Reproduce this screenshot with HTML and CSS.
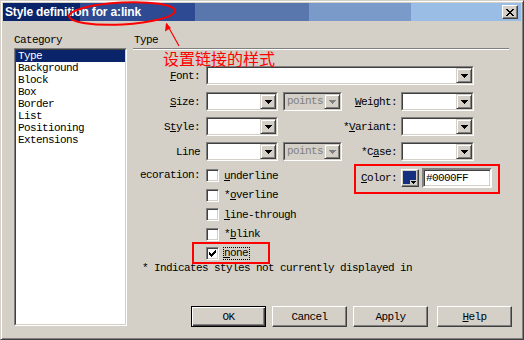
FILE: index.html
```html
<!DOCTYPE html>
<html lang="en">
<head>
  <meta charset="UTF-8">
  <title>Style definition for a:link</title>
  <link rel="stylesheet" href="styles.css">
</head>
<body>
  <div class="window">
    <div class="titlebar">
      <span class="title">Style definition for a:link</span>
      <span class="close">
        <svg width="8" height="7" viewBox="0 0 8 7"><path d="M0 0h2v1H0z M6 0h2v1H6z M1 1h2v1H1z M5 1h2v1H5z M2 2h4v1H2z M3 3h2v1H3z M2 4h4v1H2z M1 5h2v1H1z M5 5h2v1H5z M0 6h2v1H0z M6 6h2v1H6z"/></svg>
      </span>
    </div>

    <div class="main">
      <div class="sidebar">
        <div class="cap">Category</div>
        <div class="listbox">
          <ul class="list">
            <li class="sel">Type</li>
            <li>Background</li>
            <li>Block</li>
            <li>Box</li>
            <li>Border</li>
            <li>List</li>
            <li>Positioning</li>
            <li>Extensions</li>
          </ul>
        </div>
      </div>

      <div class="panel">
        <div class="cap type-cap">Type</div>
        <div class="rule"></div>

        <div class="row first">
          <span class="lbl"><u>F</u>ont:</span>
          <div class="combo w-font"><div class="field"><span class="val"></span><span class="drop"><svg width="7" height="4" viewBox="0 0 7 4"><path d="M0 0h7v1H0z M1 1h5v1H1z M2 2h3v1H2z M3 3h1v1H3z"/></svg></span></div></div>
        </div>

        <div class="row">
          <span class="lbl"><u>S</u>ize:</span>
          <div class="grp">
            <div class="combo w-size"><div class="field"><span class="val"></span><span class="drop"><svg width="7" height="4" viewBox="0 0 7 4"><path d="M0 0h7v1H0z M1 1h5v1H1z M2 2h3v1H2z M3 3h1v1H3z"/></svg></span></div></div>
            <div class="combo w-pts disabled"><div class="field"><span class="val">points</span><span class="drop"><svg width="7" height="4" viewBox="0 0 7 4"><path d="M0 0h7v1H0z M1 1h5v1H1z M2 2h3v1H2z M3 3h1v1H3z"/></svg></span></div></div>
          </div>
          <span class="rlbl"><u>W</u>eight:</span>
          <div class="combo w-right"><div class="field"><span class="val"></span><span class="drop"><svg width="7" height="4" viewBox="0 0 7 4"><path d="M0 0h7v1H0z M1 1h5v1H1z M2 2h3v1H2z M3 3h1v1H3z"/></svg></span></div></div>
        </div>

        <div class="row">
          <span class="lbl">S<u>t</u>yle:</span>
          <div class="grp">
            <div class="combo w-size"><div class="field"><span class="val"></span><span class="drop"><svg width="7" height="4" viewBox="0 0 7 4"><path d="M0 0h7v1H0z M1 1h5v1H1z M2 2h3v1H2z M3 3h1v1H3z"/></svg></span></div></div>
          </div>
          <span class="rlbl">*<u>V</u>ariant:</span>
          <div class="combo w-right"><div class="field"><span class="val"></span><span class="drop"><svg width="7" height="4" viewBox="0 0 7 4"><path d="M0 0h7v1H0z M1 1h5v1H1z M2 2h3v1H2z M3 3h1v1H3z"/></svg></span></div></div>
        </div>

        <div class="row">
          <span class="lbl">Line</span>
          <div class="grp">
            <div class="combo w-size"><div class="field"><span class="val"></span><span class="drop"><svg width="7" height="4" viewBox="0 0 7 4"><path d="M0 0h7v1H0z M1 1h5v1H1z M2 2h3v1H2z M3 3h1v1H3z"/></svg></span></div></div>
            <div class="combo w-pts disabled"><div class="field"><span class="val">points</span><span class="drop"><svg width="7" height="4" viewBox="0 0 7 4"><path d="M0 0h7v1H0z M1 1h5v1H1z M2 2h3v1H2z M3 3h1v1H3z"/></svg></span></div></div>
          </div>
          <span class="rlbl">*C<u>a</u>se:</span>
          <div class="combo w-right"><div class="field"><span class="val"></span><span class="drop"><svg width="7" height="4" viewBox="0 0 7 4"><path d="M0 0h7v1H0z M1 1h5v1H1z M2 2h3v1H2z M3 3h1v1H3z"/></svg></span></div></div>
        </div>

        <div class="deco">
          <span class="lbl deco-lbl">ecoration:</span>
          <div class="checks">
            <div class="check"><span class="box"></span><span class="ctext"><u>u</u>nderline</span></div>
            <div class="check"><span class="box"></span><span class="ctext">*<u>o</u>verline</span></div>
            <div class="check"><span class="box"></span><span class="ctext"><u>l</u>ine-through</span></div>
            <div class="check"><span class="box"></span><span class="ctext">*<u>b</u>link</span></div>
            <div class="check"><span class="box"><svg width="7" height="7" viewBox="0 0 7 7"><path d="M6 0h1v1H6z M5 1h2v1H5z M0 2h1v1H0z M4 2h3v1H4z M0 3h2v1H0z M3 3h3v1H3z M0 4h5v1H0z M1 5h3v1H1z M2 6h1v1H2z"/></svg></span><span class="ctext focus"><u>n</u>one</span></div>
          </div>
          <div class="color">
            <span class="rlbl"><u>C</u>olor:</span>
            <span class="swatch">
              <span class="chip"></span>
              <span class="notch"><svg width="5" height="3" viewBox="0 0 5 3"><path d="M0 0h5v1H0z M1 1h3v1H1z M2 2h1v1H2z"/></svg></span>
            </span>
            <span class="text-in">#0000FF</span>
          </div>
        </div>

        <p class="note">* Indicates styles not currently displayed in</p>

        <div class="buttons">
          <button class="btn default">OK</button>
          <button class="btn">Cancel</button>
          <button class="btn">Apply</button>
          <button class="btn help"><u>H</u>elp</button>
        </div>
      </div>
    </div>

    <div class="hint">设置链接的样式</div>
    <svg class="marks" width="524" height="340" viewBox="0 0 524 340">
      <ellipse cx="121" cy="12.5" rx="53" ry="11" transform="rotate(-3 121 12.5)" fill="none" stroke="#f00" stroke-width="2"/>
      <path d="M178 45L165.5 22.5" stroke="#f00" stroke-width="1.2" fill="none"/>
      <path d="M165 22L164 30.5L170 27z" fill="#f00"/>
      <rect x="354" y="164" width="144" height="28" fill="none" stroke="#f00" stroke-width="2"/>
      <rect x="192" y="242" width="76" height="20" fill="none" stroke="#f00" stroke-width="2"/>
    </svg>
  </div>
</body>
</html>
```

FILE: styles.css
```css
body {
  margin: 0;
  font-family: "Liberation Mono", monospace;
  font-size: 11px;
  letter-spacing: -0.6px;
  color: #000;
}
.window {
  position: relative;
  width: 524px;
  height: 340px;
  box-sizing: border-box;
  background: #d4d0c8;
  border: 1px solid;
  border-color: #d4d0c8 #404040 #404040 #d4d0c8;
  box-shadow: inset 1px 1px #fff, inset -1px -1px #808080;
  padding: 2px;
  display: flex;
  flex-direction: column;
}

/* title bar */
.titlebar {
  height: 18px;
  display: flex;
  align-items: center;
  background: linear-gradient(to right,
    #0a246a 0 77px, #2e4a92 77px 192px, #5977ad 192px 306px,
    #7a9bc9 306px 408px, #99bde5 408px);
}
.title {
  flex: 1;
  padding-left: 2px;
  font: bold 12px/18px "Liberation Sans", sans-serif;
  letter-spacing: -0.15px;
  color: #fff;
}
.close {
  width: 16px;
  height: 14px;
  box-sizing: border-box;
  margin-right: 3px;
  background: #d4d0c8;
  border: 1px solid;
  border-color: #fff #404040 #404040 #fff;
  box-shadow: inset -1px -1px #808080;
  display: flex;
  align-items: center;
  justify-content: center;
}

.main {
  flex: 1;
  display: flex;
}
.cap {
  line-height: 12px;
  padding-top: 13px;
}

/* category list */
.sidebar {
  width: 113px;
  margin-left: 11px;
}
.listbox {
  margin-top: 2px;
  height: 278px;
  box-sizing: border-box;
  border: 1px solid;
  border-color: #808080 #fff #fff #808080;
}
.list {
  height: 100%;
  box-sizing: border-box;
  margin: 0;
  padding: 0;
  list-style: none;
  background: #fff;
  border: 1px solid;
  border-color: #404040 #d4d0c8 #d4d0c8 #404040;
}
.list li {
  line-height: 12px;
  padding-left: 2px;
}
.list .sel {
  background: #0a246a;
  color: #fff;
}

/* type panel */
.panel {
  width: 379px;
  margin-left: 6px;
  display: flex;
  flex-direction: column;
}
.type-cap {
  padding-left: 1px;
}
.rule {
  width: 376px;
  margin-top: 2px;
  border-top: 1px solid #808080;
  border-bottom: 1px solid #fff;
}
.row {
  display: flex;
  align-items: center;
  height: 19px;
  margin-top: 6px;
}
.row.first {
  margin-top: 16px;
}
.row + .row {
  margin-top: 7px;
}
.row + .row + .row {
  margin-top: 6px;
}
.lbl {
  width: 67px;
  margin-right: 6px;
  text-align: right;
  white-space: nowrap;
}
.rlbl {
  width: 55px;
  margin-right: 4px;
  text-align: right;
  white-space: nowrap;
}
.grp {
  width: 136px;
  display: flex;
}

/* combo boxes */
.combo {
  height: 19px;
  box-sizing: border-box;
  border: 1px solid;
  border-color: #808080 #fff #fff #808080;
}
.field {
  height: 100%;
  box-sizing: border-box;
  display: flex;
  background: #fff;
  border: 1px solid;
  border-color: #404040 #d4d0c8 #d4d0c8 #404040;
}
.val {
  flex: 1;
  padding-left: 2px;
  line-height: 15px;
}
.drop {
  width: 16px;
  box-sizing: border-box;
  background: #d4d0c8;
  border: 1px solid;
  border-color: #d4d0c8 #404040 #404040 #d4d0c8;
  box-shadow: inset 1px 1px #fff, inset -1px -1px #808080;
  display: flex;
  align-items: center;
  justify-content: center;
}
.w-font { width: 268px; }
.w-size { width: 72px; }
.w-pts { width: 59px; margin-left: 5px; }
.w-right { width: 73px; }
.disabled .field { background: #d4d0c8; }
.disabled .val { color: #808080; }
.disabled svg { fill: #808080; }

/* decoration */
.deco {
  display: flex;
  align-items: flex-start;
  margin-top: 8px;
}
.deco-lbl {
  line-height: 13px;
}
.checks {
  width: 136px;
}
.check {
  display: flex;
  align-items: center;
  height: 13px;
}
.check + .check {
  margin-top: 6.5px;
}
.box {
  width: 13px;
  height: 13px;
  box-sizing: border-box;
  background: #fff;
  border: 1px solid;
  border-color: #808080 #fff #fff #808080;
  box-shadow: inset 1px 1px #404040, inset -1px -1px #d4d0c8;
  padding: 2px 0 0 2px;
}
.box svg {
  display: block;
}
.ctext {
  margin-left: 5px;
  white-space: nowrap;
}
.ctext.focus {
  margin-left: 4px;
  line-height: 11px;
  border: 1px dotted #000;
  padding-right: 1px;
}
.color {
  display: flex;
  align-items: center;
  height: 20px;
  margin-top: -1px;
}
.swatch {
  position: relative;
  width: 18px;
  height: 18px;
  box-sizing: border-box;
  margin-right: 3px;
  background: #d4d0c8;
  border: 1px solid;
  border-color: #fff #404040 #404040 #fff;
  box-shadow: inset -1px -1px #808080;
  padding: 1px;
}
.chip {
  display: block;
  width: 13px;
  height: 13px;
  background: #14307f;
}
.notch {
  position: absolute;
  right: 1px;
  bottom: 1px;
  width: 7px;
  height: 5px;
  background: #d4d0c8;
  display: flex;
  align-items: center;
  justify-content: center;
}
.text-in {
  width: 70px;
  height: 20px;
  box-sizing: border-box;
  background: #fff;
  border: 2px solid;
  border-color: #808080 #fff #fff #808080;
  box-shadow: inset 1px 1px #404040, inset -1px -1px #d4d0c8;
  padding-left: 2px;
  line-height: 16px;
}

.note {
  margin: 2px 0 0 9px;
  line-height: 12px;
  white-space: nowrap;
}

/* buttons */
.buttons {
  display: flex;
  justify-content: flex-end;
  gap: 6px;
  margin-top: auto;
  margin-bottom: 10px;
}
.btn {
  width: 75px;
  height: 21px;
  box-sizing: border-box;
  padding: 0;
  font: inherit;
  letter-spacing: inherit;
  color: #000;
  background: #d4d0c8;
  border: 1px solid;
  border-color: #fff #404040 #404040 #fff;
  box-shadow: inset -1px -1px #808080;
}
.btn.default {
  border-color: #000;
  box-shadow: inset 1px 1px #fff, inset -1px -1px #404040, inset -2px -2px #808080;
}
.btn.help {
  margin-left: 3px;
}

/* annotations drawn over the dialog */
.hint {
  position: absolute;
  left: 162px;
  top: 48px;
  font: 16px/18px "Noto Sans CJK SC", sans-serif;
  letter-spacing: 0;
  color: #f00;
}
.marks {
  position: absolute;
  left: 0;
  top: 0;
  pointer-events: none;
}
```
